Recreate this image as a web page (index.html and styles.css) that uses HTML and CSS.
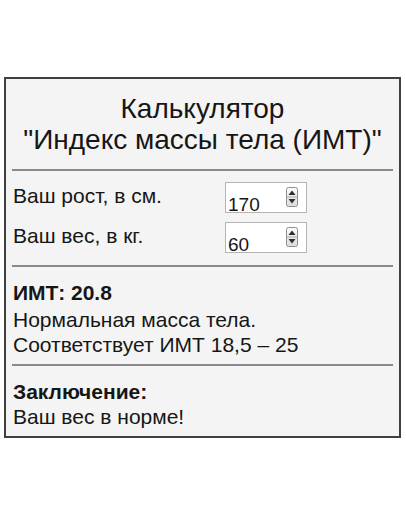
FILE: index.html
```html
<!DOCTYPE html>
<html lang="ru">
<head>
<meta charset="utf-8">
<title>Калькулятор ИМТ</title>
<link rel="stylesheet" href="styles.css">
</head>
<body>
<div class="calc">
  <header class="title">
    <div>Калькулятор</div>
    <div>"Индекс массы тела (ИМТ)"</div>
  </header>
  <hr class="sep">
  <section class="inputs">
    <div class="label">Ваш рост, в см.</div>
    <div class="field">
      <span class="value">170</span>
      <svg class="spin" width="12" height="20" viewBox="0 0 12 20">
        <defs>
          <linearGradient id="g1" x1="0" y1="0" x2="0" y2="1">
            <stop offset="0" stop-color="#fbfbfb"/>
            <stop offset="1" stop-color="#dcdcdc"/>
          </linearGradient>
        </defs>
        <rect x="0.5" y="0.5" width="11" height="19" rx="2" fill="url(#g1)" stroke="#8e8e8e"/>
        <line x1="1" y1="10" x2="11" y2="10" stroke="#a8a8a8"/>
        <path d="M2.5 8 L6 3.5 L9.5 8 Z" fill="#2e2e2e"/>
        <path d="M2.5 12 L6 16.5 L9.5 12 Z" fill="#2e2e2e"/>
      </svg>
    </div>
    <div class="label">Ваш вес, в кг.</div>
    <div class="field">
      <span class="value">60</span>
      <svg class="spin" width="12" height="20" viewBox="0 0 12 20">
        <rect x="0.5" y="0.5" width="11" height="19" rx="2" fill="url(#g1)" stroke="#8e8e8e"/>
        <line x1="1" y1="10" x2="11" y2="10" stroke="#a8a8a8"/>
        <path d="M2.5 8 L6 3.5 L9.5 8 Z" fill="#2e2e2e"/>
        <path d="M2.5 12 L6 16.5 L9.5 12 Z" fill="#2e2e2e"/>
      </svg>
    </div>
  </section>
  <hr class="sep">
  <section class="result">
    <div class="bmi">ИМТ: 20.8</div>
    <div class="line">Нормальная масса тела.</div>
    <div class="line">Соответствует ИМТ 18,5 – 25</div>
  </section>
  <hr class="sep">
  <section class="conclusion">
    <div class="head">Заключение:</div>
    <div class="line">Ваш вес в норме!</div>
  </section>
</div>
</body>
</html>
```
FILE: styles.css
```css
html, body {
  margin: 0;
  padding: 0;
  background: #ffffff;
}

body {
  font-family: "Liberation Sans", Arial, sans-serif;
  color: #161616;
}

.calc {
  box-sizing: border-box;
  width: 397px;
  margin: 77px 0 0 4px;
  border: 2px solid #404040;
  background: #f4f4f4;
}

.title {
  padding: 14px 0 14px;
  text-align: center;
  font-size: 28px;
  line-height: 31px;
}

.sep {
  height: 2px;
  margin: 0 6px;
  border: 0;
  background: #8a8a8a;
}

.inputs {
  display: grid;
  grid-template-columns: 212px 82px;
  row-gap: 9px;
  padding: 11px 7px 12px;
  font-size: 21px;
  line-height: 25px;
}

.label {
  padding-top: 1px;
}

.field {
  box-sizing: border-box;
  height: 31px;
  display: flex;
  align-items: flex-start;
  justify-content: space-between;
  border: 1px solid #b4b4b4;
  background: #ffffff;
  padding: 0 8px 0 2px;
}

.value {
  padding-top: 12px;
  font-size: 19px;
  line-height: 20px;
}

.spin {
  display: block;
  margin-top: 4px;
}

.result {
  padding: 12px 7px 7px;
  font-size: 21px;
  line-height: 25px;
}

.bmi {
  font-weight: bold;
  line-height: 28px;
}

.conclusion {
  padding: 13px 7px 7px;
  font-size: 21px;
  line-height: 25px;
}

.head {
  font-weight: bold;
}
```
